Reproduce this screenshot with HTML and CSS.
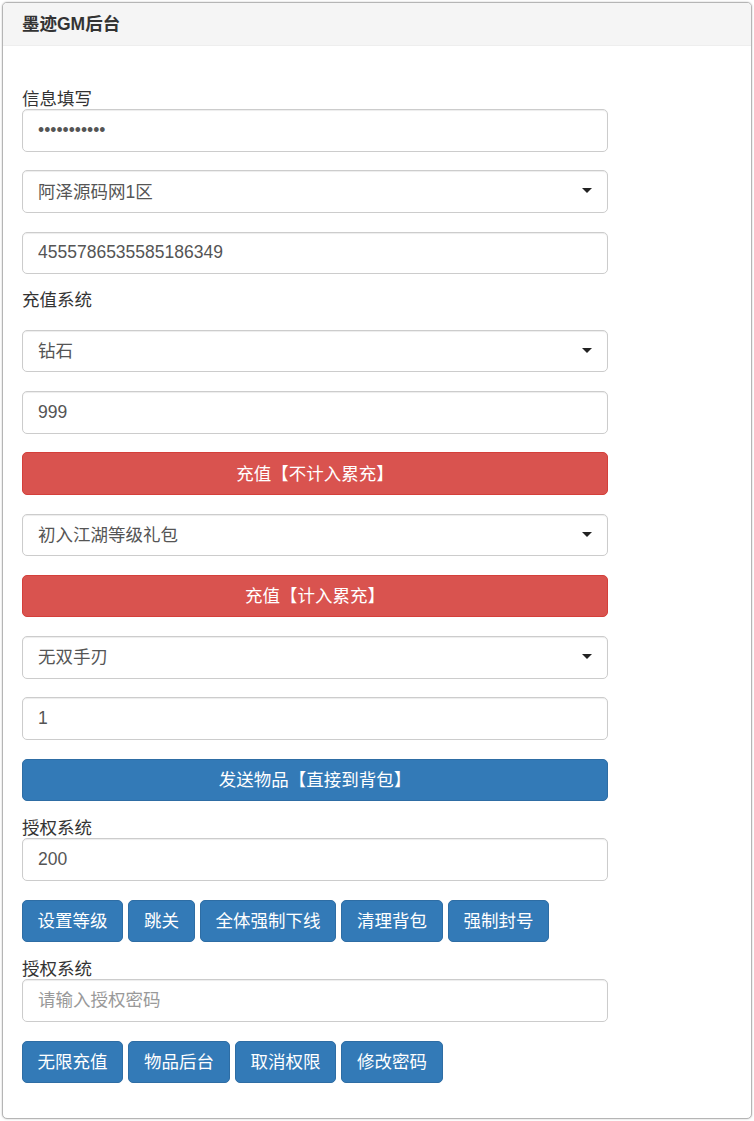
FILE: index.html
```html
<!DOCTYPE html>
<html lang="zh-CN">
<head>
<meta charset="utf-8">
<title>墨迹GM后台</title>
<link rel="stylesheet" href="styles.css">
</head>
<body>
<div class="panel">
  <div class="panel-heading">墨迹GM后台</div>
  <div class="panel-body">
    <div class="lbl">信息填写</div>
    <input class="field" type="password" value="12345678901">
    <div class="select-wrap field">
      <select class="select"><option>阿泽源码网1区</option></select>
    </div>
    <input class="field" type="text" value="4555786535585186349">

    <div class="lbl lbl-sys">充值系统</div>
    <div class="select-wrap field">
      <select class="select"><option>钻石</option></select>
    </div>
    <input class="field" type="text" value="999">
    <button class="btn btn-block btn-danger field">充值【不计入累充】</button>
    <div class="select-wrap field">
      <select class="select"><option>初入江湖等级礼包</option></select>
    </div>
    <button class="btn btn-block btn-danger field">充值【计入累充】</button>
    <div class="select-wrap field">
      <select class="select"><option>无双手刃</option></select>
    </div>
    <input class="field" type="text" value="1">
    <button class="btn btn-block btn-primary field">发送物品【直接到背包】</button>

    <div class="lbl lbl-tight">授权系统</div>
    <input class="field" type="text" value="200">
    <div class="btn-row field">
      <button class="btn btn-primary">设置等级</button>
      <button class="btn btn-primary">跳关</button>
      <button class="btn btn-primary">全体强制下线</button>
      <button class="btn btn-primary">清理背包</button>
      <button class="btn btn-primary">强制封号</button>
    </div>

    <div class="lbl lbl-tight">授权系统</div>
    <input class="field" type="text" placeholder="请输入授权密码">
    <div class="btn-row">
      <button class="btn btn-primary">无限充值</button>
      <button class="btn btn-primary">物品后台</button>
      <button class="btn btn-primary">取消权限</button>
      <button class="btn btn-primary">修改密码</button>
    </div>
  </div>
</div>
</body>
</html>
```

FILE: styles.css
```css
* { box-sizing: border-box; }

html, body {
  margin: 0;
  padding: 0;
  background: #fff;
}

body {
  padding: 2px 2px 2px 2px;
  font-family: "Liberation Sans", "Noto Sans CJK SC", sans-serif;
  font-size: 17.5px;
  color: #333;
}

.panel {
  border: 1px solid #b5b5b5;
  border-radius: 5px;
  box-shadow: 0 0 2px rgba(0, 0, 0, 0.25);
  background: #fff;
  height: 1117px;
  overflow: hidden;
}

.panel-heading {
  height: 43px;
  line-height: 43px;
  padding: 0 19px;
  background: #f5f5f5;
  border-bottom: 1px solid #eee;
  font-weight: bold;
  font-size: 17.5px;
  color: #333;
}

.panel-body {
  padding: 43px 19px 34px;
}

.lbl {
  height: 20px;
  line-height: 20px;
  color: #333;
  white-space: nowrap;
}

.lbl-sys {
  margin-top: -3px;
  margin-bottom: 20px;
}

.lbl-tight {
  margin-top: -1.5px;
}

.field {
  display: block;
  width: 586px;
  height: 42.5px;
  margin: 0 0 18.75px 0;
}

input.field {
  padding: 0 15px;
  border: 1px solid #ccc;
  border-radius: 5px;
  font-family: inherit;
  font-size: 17.5px;
  color: #555;
  background: #fff;
  box-shadow: inset 0 1px 1px rgba(0, 0, 0, 0.075);
  outline: none;
}

input.field::placeholder {
  color: #999;
}

.select-wrap {
  position: relative;
}

.select {
  appearance: none;
  -webkit-appearance: none;
  display: block;
  width: 100%;
  height: 100%;
  padding: 0 15px;
  border: 1px solid #ccc;
  border-radius: 5px;
  font-family: inherit;
  font-size: 17.5px;
  color: #555;
  background: #fff;
  box-shadow: inset 0 1px 1px rgba(0, 0, 0, 0.075);
  outline: none;
}

.select-wrap::after {
  content: "";
  position: absolute;
  right: 16px;
  top: 18px;
  width: 0;
  height: 0;
  border-left: 5px solid transparent;
  border-right: 5px solid transparent;
  border-top: 5px solid #222;
  pointer-events: none;
}

.btn {
  display: inline-block;
  height: 42.5px;
  padding: 0 14.6px;
  border: 1px solid transparent;
  border-radius: 5px;
  font-family: inherit;
  font-size: 17.5px;
  line-height: 40px;
  color: #fff;
  text-align: center;
  white-space: nowrap;
  cursor: pointer;
}

.btn-block {
  display: block;
  width: 586px;
}

.btn-danger {
  background: #d9534f;
  border-color: #d43f3a;
}

.btn-primary {
  background: #337ab7;
  border-color: #2e6da4;
}

.btn-row {
  display: flex;
  gap: 5.3px;
  width: auto;
}
```
